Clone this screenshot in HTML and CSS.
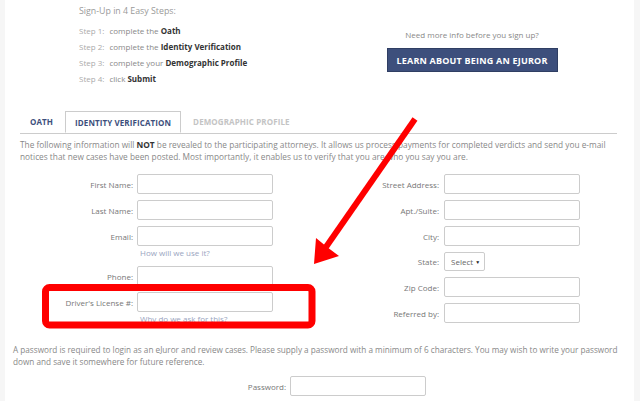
FILE: index.html
```html
<!DOCTYPE html>
<html lang="en">
<head>
    <meta charset="UTF-8">
    <meta name="viewport" content="width=device-width, initial-scale=1.0">
    <title>eJuror Sign-Up</title>
    <link rel="stylesheet" href="styles.css">
</head>
<body>
    <div class="page">
        <div class="intro">
            <div class="steps">
                <p class="steps-title">Sign-Up in 4 Easy Steps:</p>
                <p class="step"><span class="step-num">Step 1:</span> complete the <b>Oath</b></p>
                <p class="step"><span class="step-num">Step 2:</span> complete the <b>Identity Verification</b></p>
                <p class="step"><span class="step-num">Step 3:</span> complete your <b>Demographic Profile</b></p>
                <p class="step"><span class="step-num">Step 4:</span> click <b>Submit</b></p>
            </div>
            <div class="more">
                <p>Need more info before you sign up?</p>
                <button class="learn-btn">LEARN ABOUT BEING AN EJUROR</button>
            </div>
        </div>

        <ul class="tabs">
            <li class="tab">OATH</li>
            <li class="tab active">IDENTITY VERIFICATION</li>
            <li class="tab disabled">DEMOGRAPHIC PROFILE</li>
        </ul>

        <p class="note">The following information will <b>NOT</b> be revealed to the participating attorneys. It allows us process payments for completed verdicts and send you e-mail notices that new cases have been posted. Most importantly, it enables us to verify that you are who you say you are.</p>

        <div class="form">
            <div class="col">
                <div class="row"><label>First Name:</label><input type="text"></div>
                <div class="row"><label>Last Name:</label><input type="text"></div>
                <div class="row"><label>Email:</label><input type="text"><a class="help">How will we use it?</a></div>
                <div class="row"><label>Phone:</label><input type="text"></div>
                <div class="row"><label>Driver's License #:</label><input type="text"><a class="help">Why do we ask for this?</a></div>
            </div>
            <div class="col right">
                <div class="row"><label>Street Address:</label><input type="text"></div>
                <div class="row"><label>Apt./Suite:</label><input type="text"></div>
                <div class="row"><label>City:</label><input type="text"></div>
                <div class="row"><label>State:</label><span class="select">Select <i>&#9660;</i></span></div>
                <div class="row"><label>Zip Code:</label><input type="text"></div>
                <div class="row"><label>Referred by:</label><input type="text"></div>
            </div>
        </div>

        <p class="note pw-note">A password is required to login as an eJuror and review cases. Please supply a password with a minimum of 6 characters. You may wish to write your password down and save it somewhere for future reference.</p>

        <div class="row pw-row"><label>Password:</label><input type="password"></div>
    </div>

    <!-- red markup drawn over the screenshot -->
    <svg class="markup" width="640" height="401" viewBox="0 0 640 401">
        <rect x="45.5" y="287.5" width="266.5" height="37.5" rx="4" fill="none" stroke="#f00" stroke-width="7"/>
        <line x1="415" y1="119" x2="326" y2="247" stroke="#f00" stroke-width="6"/>
        <polygon points="314,264 316,238 327,247 339,256" fill="#f00"/>
    </svg>
</body>
</html>
```

FILE: styles.css
```css
body {
    margin: 0;
    background: #f6f6f6;
    font-family: "Open Sans", Arial, sans-serif;
    font-size: 8px;
    color: #888;
}
p {
    margin: 0;
}
.page {
    position: relative;
    width: 629px;
    min-height: 401px;
    margin-left: 5px;
    background: #fff;
}
.intro {
    display: flex;
    height: 107px;
}
.steps {
    box-sizing: border-box;
    width: 367px;
    padding-left: 74px;
    padding-top: 3px;
}
.steps-title {
    line-height: 16px;
    margin-bottom: 4px;
    font-size: 8.8px;
    color: #999;
}
.step {
    line-height: 16px;
    color: #888;
}
.step b {
    color: #333;
}
.step-num {
    color: #aaa;
    margin-right: 3px;
}
.more {
    width: 200px;
    padding-top: 27px;
    text-align: center;
}
.more p {
    line-height: 16px;
    color: #888;
}
.learn-btn {
    margin-top: 5px;
    width: 171px;
    height: 24px;
    background: #3d4f7c;
    border: 1px solid #2f3e63;
    color: #fff;
    font-family: "Open Sans", Arial, sans-serif;
    font-size: 9px;
    font-weight: 700;
    letter-spacing: 0.2px;
    padding: 0;
}
.tabs {
    display: flex;
    gap: 2px;
    list-style: none;
    margin: 4px 0 0 15px;
    padding: 0;
    width: 597px;
    height: 22px;
    border-bottom: 1px solid #ccc;
}
.tab {
    padding: 0 10px;
    line-height: 21px;
    font-weight: 700;
    font-size: 8px;
    letter-spacing: 0.1px;
    color: #3d4f7c;
}
.tab.active {
    padding: 0 9px;
    border: 1px solid #ccc;
    border-bottom: 1px solid #fff;
    background: #fff;
}
.tab.disabled {
    color: #c4c4c4;
}
.note {
    margin: 5px 0 0 15px;
    line-height: 12px;
    font-size: 8.3px;
    width: 600px;
}
.note b {
    color: #333;
}
.form {
    display: grid;
    grid-template-columns: 306px 1fr;
    margin-top: 11px;
}
.col {
    display: flex;
    flex-direction: column;
    gap: 6px;
}
.row {
    display: grid;
    grid-template-columns: 128px 136px;
    column-gap: 4px;
    align-items: center;
}
.col.right .row {
    column-gap: 5px;
}
.row label {
    text-align: right;
    color: #777;
}
.row input {
    box-sizing: border-box;
    width: 136px;
    height: 20px;
    border: 1px solid #ccc;
    border-radius: 2px;
    margin: 0;
}
.help {
    grid-column: 2;
    padding-left: 3px;
    line-height: 14px;
    color: #9aa5c0;
}
.select {
    box-sizing: border-box;
    width: 41px;
    height: 19px;
    border: 1px solid #ccc;
    border-radius: 2px;
    padding-left: 6px;
    line-height: 17px;
    color: #666;
}
.select i {
    font-style: normal;
    font-size: 5px;
    color: #222;
    vertical-align: 1px;
}
.pw-note {
    margin: 18px 0 0 8px;
    width: 620px;
    font-size: 8.2px;
}
.pw-row {
    margin: 8px 0 0 153px;
}
.markup {
    position: absolute;
    top: 0;
    left: 0;
    pointer-events: none;
}
```
